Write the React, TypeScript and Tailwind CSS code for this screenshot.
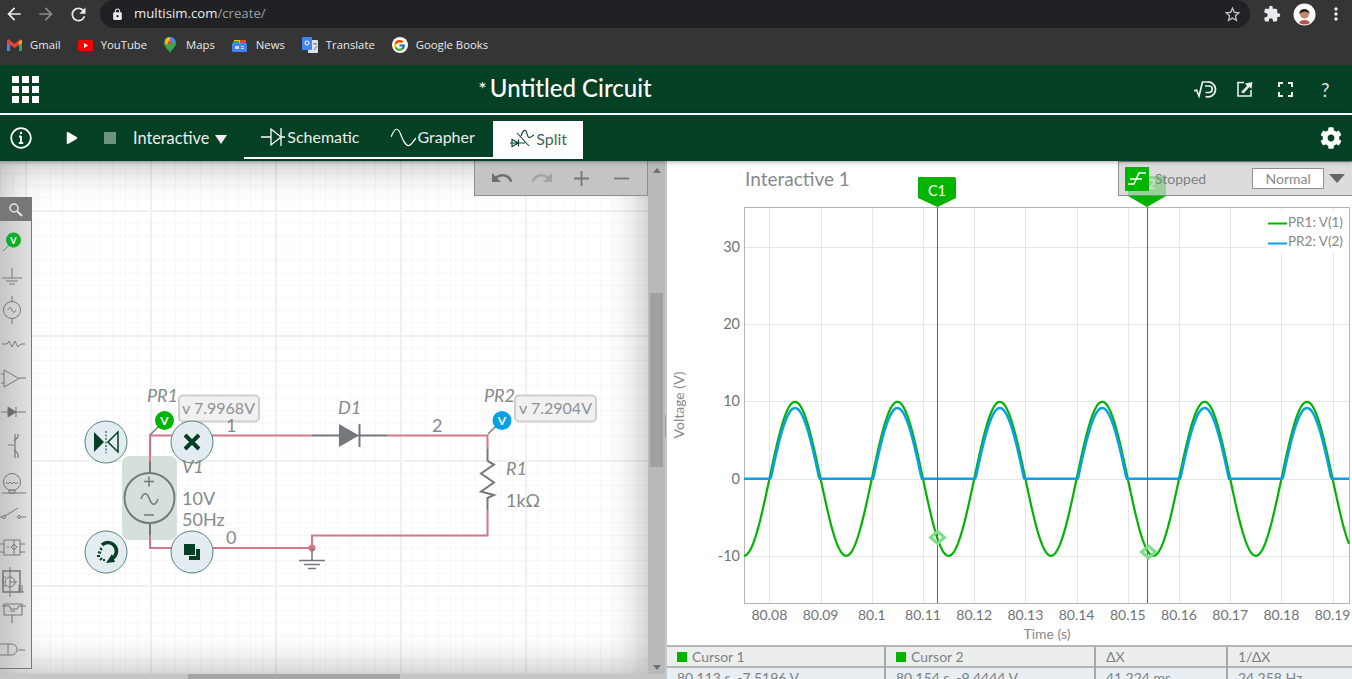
import { FaCog, FaPlay } from 'react-icons/fa';
import { FcGoogle } from 'react-icons/fc';
import { MdArrowBack, MdArrowForward, MdExtension, MdLock, MdMoreVert, MdRedo, MdRefresh, MdStarBorder, MdUndo } from 'react-icons/md';

// chart scale, in page pixels
const xOf = (t: number) => 769.4 + (t - 80.08) * 5120;
const yOf = (v: number) => 478.8 - v * 7.74;

const buildWave = (fn: (x: number) => number) => {
  const pts: string[] = [];
  for (let x = 744; x <= 1349; x += 1) {
    const t = 80.08 + (x - 769.4) / 5120;
    pts.push(`${x},${yOf(fn(t)).toFixed(2)}`);
  }
  return pts.join(' ');
};

const v1 = (t: number) => 9.95 * Math.sin(2 * Math.PI * 50 * (t - 80.08));
const v2 = (t: number) => Math.max(0, v1(t) - 0.8);

const ticksX = ['80.08', '80.09', '80.1', '80.11', '80.12', '80.13', '80.14', '80.15', '80.16', '80.17', '80.18', '80.19'];
const ticksY = [30, 20, 10, 0, -10];

function BrowserBar() {
  return (
    <div className="h-7 bg-[#353535] flex items-center text-[#e8eaed] shrink-0">
      <div className="w-[100px] flex items-center pl-[4px] gap-[12px]">
        <MdArrowBack size={20} />
        <MdArrowForward size={20} className="text-[#8a8b8d]" />
        <MdRefresh size={21} />
      </div>
      <div className="w-[1150px] h-7 bg-[#202124] rounded-r-[14px] rounded-l-[14px] flex items-center pl-[11px] pr-[8px]">
        <MdLock size={13} />
        <span className="ml-[10px] text-[13.2px] font-['Open_Sans',sans-serif]">multisim.com<span className="text-[#9aa0a6]">/create/</span></span>
        <MdStarBorder size={19} className="ml-auto text-[#c4c6c8]" />
      </div>
      <MdExtension size={18} className="ml-[13px]" />
      <svg className="ml-[12px]" width="23" height="23" viewBox="0 0 23 23">
        <circle cx="11.500" cy="11.500" r="11" fill="#fff" />
        <path d="M6 20c1-4 10-4 11 0a11 11 0 0 1-11 0z" fill="#b5573f" />
        <circle cx="11.500" cy="11" r="4.500" fill="#c08a6a" />
        <path d="M6.500 11c-1-6 10-7 10 0-2-3-7-3-10 0z" fill="#2e2420" />
      </svg>
      <MdMoreVert size={20} className="ml-[10px]" />
    </div>
  );
}

function Bookmark({ icon, label }: { icon: React.ReactNode; label: string }) {
  return (
    <div className="flex items-center gap-[8px]">
      {icon}
      <span>{label}</span>
    </div>
  );
}

function BookmarksBar() {
  return (
    <div className="h-[37px] pb-[3px] bg-[#353535] flex items-center pl-[7px] gap-[17px] text-[11.3px] text-[#e8eaed] font-['Open_Sans',sans-serif] shrink-0">
      <Bookmark
        label="Gmail"
        icon={
          <svg width="15" height="12" viewBox="0 0 15 12">
            <path d="M0 2v10h3V5z" fill="#4285f4" />
            <path d="M15 2v10h-3V5z" fill="#34a853" />
            <path d="M0 1.500 1.500 0 7.500 5 13.500 0 15 1.500V4L7.500 9 0 4z" fill="#ea4335" />
            <path d="M12 2.500 15 1v3l-3 2z" fill="#fbbc04" />
          </svg>
        }
      />
      <Bookmark
        label="YouTube"
        icon={
          <svg width="15" height="11" viewBox="0 0 15 11">
            <rect width="15" height="11" rx="2.500" fill="#f00" />
            <path d="M6 3v5l4-2.500z" fill="#fff" />
          </svg>
        }
      />
      <Bookmark
        label="Maps"
        icon={
          <svg width="14" height="16" viewBox="0 0 14 16">
            <path d="M6 0a6 6 0 0 1 6 6c0 4-4 6-6 10C4 12 0 10 0 6a6 6 0 0 1 6-6z" fill="#34a853" />
            <path d="M1 3a6 6 0 0 1 5-3v4L2 8z" fill="#fbbc04" />
            <path d="M6 0a6 6 0 0 1 5.500 3.500L8 6 6 4z" fill="#4285f4" />
            <circle cx="6" cy="5.500" r="2" fill="#ea4335" />
          </svg>
        }
      />
      <Bookmark
        label="News"
        icon={
          <svg width="16" height="13" viewBox="0 0 16 13">
            <path d="M2 1h11v3H2z" fill="#fbbc04" />
            <path d="M1 2h6v3H1z" fill="#34a853" />
            <path d="M8 1h6v3H8z" fill="#ea4335" />
            <rect y="4" width="15" height="9" rx="1" fill="#4285f4" />
            <rect x="3" y="7" width="4" height="3" fill="#cfe0fc" />
            <rect x="9" y="7" width="3" height="1" fill="#cfe0fc" />
            <rect x="9" y="9" width="3" height="1" fill="#cfe0fc" />
          </svg>
        }
      />
      <Bookmark
        label="Translate"
        icon={
          <svg width="16" height="16" viewBox="0 0 16 16">
            <rect x="6" y="3" width="10" height="13" rx="1" fill="#dfe1e5" />
            <rect width="10" height="13" rx="1" fill="#4285f4" />
            <circle cx="5" cy="6" r="2" fill="none" stroke="#fff" strokeWidth="1" />
            <path d="M11 7h4M13 6v1M12 13l3-4" stroke="#777" strokeWidth="1" />
          </svg>
        }
      />
      <Bookmark label="Google Books" icon={<span className="w-4 h-4 rounded-full bg-white flex items-center justify-center"><FcGoogle size={13} /></span>} />
    </div>
  );
}

function AppHeader() {
  return (
    <div className="h-[48px] bg-[#034024] flex items-center relative shrink-0 text-white">
      <div className="grid grid-cols-3 gap-[3px] ml-3">
        {Array.from({ length: 9 }).map((_, i) => (
          <div key={i} className="w-[7px] h-[7px] bg-white" />
        ))}
      </div>
      <div className="flex-1 flex justify-center items-center pr-[103px] pb-[2px]">
        <span className="text-[20px] mr-[3px] leading-none">*</span>
        <span className="text-[24px] font-medium leading-none">Untitled Circuit</span>
      </div>
      <div className="flex items-center text-[#ececec]">
        <svg width="24" height="20" viewBox="0 0 24 20" fill="none" stroke="currentColor" strokeWidth="1.700">
          <path d="M0 12l2.500-1 2.500 6L8.500 3H13" />
          <path d="M13 3a7.500 7.500 0 1 1-1.500 14.500" />
          <path d="M11 7h4a3 3 0 0 1 0 6.500h-3.500" />
        </svg>
        <svg className="ml-[19px]" width="16" height="16" viewBox="0 0 16 16" fill="none">
          <path d="M7 1.500H1v13.500h13V9" stroke="currentColor" strokeWidth="1.600" />
          <path d="M4 11 10 5l-2-2.500L15.500 1l-1 7-2-2-6 6.500z" fill="currentColor" />
        </svg>
        <svg className="ml-[25px]" width="15" height="15" viewBox="0 0 15 15" fill="none" stroke="currentColor" strokeWidth="2">
          <path d="M1 5V1h4M10 1h4v4M14 10v4h-4M5 14H1v-4" />
        </svg>
        <span className="ml-[28px] mr-[21px] w-[10px] text-[19px] leading-none text-[#e2e2e2]">?</span>
      </div>
    </div>
  );
}

function Toolbar() {
  return (
    <div className="shrink-0 bg-[#034024] border-t-2 border-white h-[48px] flex items-center text-[#ededed] relative z-10 shadow-[0_1px_4px_rgba(0,0,0,0.35)]">
      <svg className="ml-[10px]" width="22" height="22" viewBox="0 0 22 22" fill="none" stroke="white" strokeWidth="1.700">
        <circle cx="11" cy="11" r="9.800" />
        <path d="M11 9v7M8.800 16h4.400M9 9.500h2" strokeWidth="1.800" />
        <circle cx="11" cy="6" r="1.200" fill="white" stroke="none" />
      </svg>
      <FaPlay size={12} className="ml-[34px] text-white" />
      <div className="ml-[26px] w-3 h-3 bg-[#6c9581]" />
      <span className="ml-[17px] text-[16.300px]">Interactive</span>
      <span className="ml-[6px] mt-[2px] w-0 h-0 border-x-[6.500px] border-x-transparent border-t-[9px] border-t-[#f0f0f0]" />
      <div className="ml-[17px] w-[249px] h-[38px] mt-[4px] pb-[4px] border-b-2 border-white flex items-center">
        <svg className="ml-[17px]" width="24" height="22" viewBox="0 0 24 22" fill="none" stroke="white" strokeWidth="1.300">
          <path d="M0 11h10M10 3v16l10-8zM20 2v18M20 11h4" />
        </svg>
        <span className="ml-[2px] text-[16px] text-[#ededed]">Schematic</span>
        <svg className="ml-[32px]" width="25" height="22" viewBox="0 0 25 22" fill="none" stroke="white" strokeWidth="1.200">
          <path d="M0 11C4 1 7 1 10 9s6 12 9 10 4-5 6-7" />
        </svg>
        <span className="ml-[1px] text-[16px] text-[#ededed]">Grapher</span>
      </div>
      <div className="w-[90px] h-[38px] mt-[4px] pb-[2px] bg-white flex items-center text-[#3f6a58]">
        <svg className="ml-[16px]" width="26" height="20" viewBox="0 0 26 20" fill="none" stroke="#034024" strokeWidth="1.100">
          <path d="M1 14h15M3 10.500v7l6.500-3.500zM9.500 10.500v7M8 4l12 13" />
          <path d="M12 7c1-3 3-6 4.500-5.500S18 8 20 8.500s3-2 5-2.500" />
        </svg>
        <span className="text-[16px] ml-[1px]">Split</span>
      </div>
      <FaCog size={22} className="ml-auto mr-[10px] text-white" />
    </div>
  );
}

function Palette() {
  return (
    <div className="absolute left-0 top-[36px] w-[32px] h-[472px] border-r border-b border-[#777] bg-gradient-to-r from-[#c4c6c7] to-[#e0e1e1] text-[#777]">
      <div className="h-6 bg-[#777] flex items-center justify-center">
        <svg width="15" height="15" viewBox="0 0 15 15" fill="none" stroke="#e8e8e8" strokeWidth="1.500">
          <circle cx="6" cy="6" r="4" />
          <path d="M9 9l5 5" strokeWidth="2" />
        </svg>
      </div>
      <svg className="block" width="31" height="448" viewBox="0 221 31 448" fill="none" stroke="#777" strokeWidth="1">
        <path d="M3 251l7-7" />
        <circle cx="13.500" cy="240" r="7.500" fill="#10ad2a" stroke="none" />
        <text x="13.500" y="243.500" fontSize="9" fontWeight="700" fill="#fff" stroke="none" textAnchor="middle">V</text>
        <path d="M12 268v10M2 278h20M6 281h12M9 284h6" />
        <circle cx="12" cy="310" r="8.500" />
        <path d="M12 296v5M12 319v5M8 310c1-3 3-3 4 0s3 3 4 0" />
        <path d="M2 344h5l2-3 3 6 3-6 3 6 3-3h4" />
        <path d="M4 370v17l15-8.500zM19 378h7M1 374h3M1 383h3" />
        <path d="M8 407v10l8-5zM16 407v10M1 412h25" fill="#666" />
        <path d="M15 434v24M8 445h6M14 441l4-4M14 449l4 5M18 437v-3M18 454v4" strokeWidth="1.200" />
        <circle cx="12" cy="482" r="8.500" />
        <path d="M6 482l2 2 2-2 2 2 2-2 2 2 2-2M2 493h24M9 490h6v3H9z" />
        <circle cx="4" cy="517" r="1.500" />
        <circle cx="19" cy="517" r="1.500" />
        <path d="M0 517h3M5 516l13-8M21 517h5" />
        <rect x="4" y="540" width="16" height="15" />
        <path d="M0 544h4M0 552h4M20 544h5M20 552h5M14 540v15M11 547l3-3 3 3-3 3zM7 547h2" />
        <rect x="3" y="571" width="17" height="21" strokeWidth="1.500" />
        <circle cx="10" cy="582" r="5" />
        <path d="M10 567v30M10 582h7M19 585v7h5M22 585v7M6 577H3v9h3" />
        <path d="M2 606h7l2 3h6l2-3h7M4 604h18v11H4zM12 615v8M10 611h5" strokeWidth="1.100" />
        <path d="M0 644h8v11H0M8 644h4a5.500 5.500 0 0 1 5 5.500 5.500 5.500 0 0 1-5 5.500H8M18 650h7" />
      </svg>
    </div>
  );
}

function CircleButton({ cx, cy, children }: { cx: number; cy: number; children: React.ReactNode }) {
  return (
    <g>
      <circle cx={cx} cy={cy} r="21" fill="#e3ecf1" stroke="#56867a" strokeWidth="1" />
      {children}
    </g>
  );
}

function Circuit() {
  const wire = '#d27887';
  const lead = '#74787c';
  const label = '#85898c';
  return (
    <svg className="absolute left-0 top-0" width="648" height="513" viewBox="0 161 648 513" fill="none">
      {/* selection behind the source */}
      <rect x="122" y="456" width="55" height="84" rx="7" fill="#d6e0da" />

      <path d="M150 462V435.500H312M387 435.500H487.500V449M487.500 510V535.500H312V548M150 522V548H312" stroke={wire} strokeWidth="2" />
      <path d="M312 435.500H340M358 435.500H387" stroke={lead} strokeWidth="2" />
      <path d="M150 462V473M150 524V535" stroke={lead} strokeWidth="2" />
      <path d="M487.500 449V461M487.500 497V510" stroke={lead} strokeWidth="2" />

      {/* V1 */}
      <circle cx="149.500" cy="498" r="25" stroke={lead} strokeWidth="2" fill="#d6e0da" />
      <path d="M144 481.500h10M149 476.500v10M144 515h10" stroke={lead} strokeWidth="1.500" />
      <path d="M141 499c2.500-7 6-7 8.500 0s6 7 8.500 0" stroke={lead} strokeWidth="1.500" />

      {/* D1 */}
      <path d="M339 424v23l20-11.500z" fill={lead} />
      <path d="M359.500 424v23" stroke={lead} strokeWidth="2" />

      {/* R1 */}
      <path d="M487.500 461l6.500 3.500-13 9 13 9-13 9 13 3.500-6.500 3" stroke={lead} strokeWidth="2" strokeLinejoin="miter" />

      {/* ground */}
      <circle cx="312" cy="548" r="3.500" fill={wire} />
      <path d="M312 548v12M299 560.500h26M304 564.500h16M308 568.500h8" stroke={lead} strokeWidth="1.500" />

      {/* probes */}
      <path d="M150 435l9-9" stroke={lead} strokeWidth="1.500" />
      <circle cx="164.500" cy="420.500" r="9.500" fill="#00b400" />
      <text x="164.500" y="425" fontSize="12" fontWeight="700" fill="#fff" textAnchor="middle">V</text>
      <path d="M488 434l9-9" stroke={lead} strokeWidth="1.500" />
      <circle cx="502" cy="420.500" r="9.500" fill="#07a0e6" />
      <text x="502" y="425" fontSize="12" fontWeight="700" fill="#fff" textAnchor="middle">V</text>

      <rect x="179" y="395.500" width="80" height="26" rx="4" fill="#f1f1f1" stroke="#cfcfcf" strokeWidth="2" />
      <text x="182" y="414" fontSize="16" fill="#8e9195">v 7.9968V</text>
      <rect x="515" y="395.500" width="81" height="26" rx="4" fill="#f1f1f1" stroke="#cfcfcf" strokeWidth="2" />
      <text x="519" y="414" fontSize="16" fill="#8e9195">v 7.2904V</text>

      <CircleButton cx={106} cy={442}>
        <path d="M94 432v20l10-10z" fill="#043f26" />
        <path d="M118 432v20l-10-10z" fill="#e3ecf1" stroke="#043f26" strokeWidth="1.500" />
        <path d="M106 431v22" stroke="#043f26" strokeDasharray="2 1.500" />
      </CircleButton>
      <CircleButton cx={192} cy={442}>
        <path d="M185 435l14 14M199 435l-14 14" stroke="#043f26" strokeWidth="4" />
      </CircleButton>
      <CircleButton cx={106} cy={552}>
        <path d="M102 545a8.500 8.500 0 1 1 9 14" stroke="#043f26" strokeWidth="3.500" />
        <path d="M106 563l9-1-3-8z" fill="#043f26" />
        <path d="M97 556h3M98 552l3 1M100 548l2 2M100 560l2-2M104 561l0-2" stroke="#043f26" strokeWidth="2" />
      </CircleButton>
      <CircleButton cx={192} cy={552}>
        <rect x="184" y="544" width="11" height="11" fill="#043f26" />
        <path d="M196 549h4v11h-11v-4h7z" fill="#043f26" />
      </CircleButton>

      <g fontSize="18" fill={label}>
        <text x="147" y="401.500" fontStyle="italic">PR1</text>
        <text x="484" y="401.500" fontStyle="italic">PR2</text>
        <text x="338" y="414" fontStyle="italic">D1</text>
        <text x="182" y="473" fontStyle="italic">V1</text>
        <text x="182" y="505">10V</text>
        <text x="182" y="526">50Hz</text>
        <text x="226" y="432">1</text>
        <text x="432" y="432">2</text>
        <text x="226" y="544">0</text>
        <text x="506" y="475" fontStyle="italic">R1</text>
        <text x="506" y="507">1kΩ</text>
      </g>
    </svg>
  );
}

function SchematicPane() {
  return (
    <div className="w-[667px] shrink-0 flex flex-col bg-[#b9babb] border-r-2 border-[#c3c8cd]">
      <div className="flex flex-1 min-h-0">
        <div className="relative w-[648px] shrink-0 overflow-hidden bg-white [background-image:linear-gradient(#f0f0f0_2px,transparent_2px),linear-gradient(90deg,#f0f0f0_2px,transparent_2px),linear-gradient(#f7f7f7_1px,transparent_1px),linear-gradient(90deg,#f7f7f7_1px,transparent_1px)] [background-size:125px_125px,125px_125px,12.5px_12.5px,12.5px_12.5px] [background-position:0_49px,25px_0,0_-1px,0_0]">
          <div className="absolute inset-0 shadow-[inset_0_0_42px_rgba(0,0,0,0.33)]" />
          <Circuit />
          <Palette />
          <div className="absolute top-0 right-0 w-[174px] h-[35px] bg-[#c4c4c4] border-x border-b border-[#8f8f8f] flex items-center text-[#6e6e6e]">
            <MdUndo size={24} className="ml-[15px]" />
            <MdRedo size={24} className="ml-[16px] text-[#a3a3a3]" />
            <span className="ml-[18px] w-[18px] h-[18px] flex items-center justify-center">
              <svg width="15" height="15" viewBox="0 0 15 15" stroke="#767676" strokeWidth="1.800"><path d="M0 7.500h15M7.500 0v15" /></svg>
            </span>
            <svg className="ml-[24px]" width="15" height="3" viewBox="0 0 15 3" stroke="#767676" strokeWidth="1.800"><path d="M0 1.500h15" /></svg>
          </div>
        </div>
        <div className="flex-1 flex flex-col items-center relative">
          <span className="mt-[7px] w-0 h-0 border-x-[4px] border-x-transparent border-b-[5px] border-b-[#6f6f6f]" />
          <div className="mt-[120px] w-[13px] h-[174px] bg-[#a0a0a0]" />
          <span className="mt-auto mb-[4px] w-0 h-0 border-x-[4px] border-x-transparent border-t-[5px] border-t-[#6f6f6f]" />
        </div>
      </div>
      <div className="h-[5px] shrink-0 bg-[#c5c5c5] pl-[188px]">
        <div className="w-[212px] h-[5px] bg-[#a6a6a6]" />
      </div>
    </div>
  );
}

function Chart() {
  return (
    <svg className="absolute inset-0" width="685" height="484" viewBox="667 161 685 484" fill="none">
      {/* grid */}
      {ticksX.map((t) => (
        <path key={t} d={`M${Math.round(xOf(Number(t))) + 0.5} 207V603`} stroke="#e6e6e6" />
      ))}
      {ticksY.map((v) => (
        <path key={v} d={`M744 ${Math.round(yOf(v)) + 0.5}H1349`} stroke="#e6e6e6" />
      ))}
      <rect x="744.500" y="207.500" width="605" height="396" stroke="#b4b4b4" />

      {/* curves */}
      <polyline points={buildWave(v1)} stroke="#00b400" strokeWidth="2.200" />
      <polyline points={buildWave(v2)} stroke="#0aa0e8" strokeWidth="2.500" />

      {/* cursors */}
      <path d="M937.500 207V603M1147.500 207V603" stroke="#109a20" />
      <path d="M930.500 537.500l7-6 7 6-7 6zM1141.500 552l7-6 7 6-7 6z" stroke="#7fdc8a" strokeWidth="3" />
      <path d="M921 177h33a2 2 0 0 1 2 2v19l-18.500 9-19.500-9v-19a2 2 0 0 1 3-2z" fill="#00b400" />
      <text x="937" y="196" fontSize="14.500" fill="#fff" textAnchor="middle">C1</text>
      <path d="M1128 196h38l-19 11z" fill="#00b400" />

      {/* axis labels */}
      {ticksY.map((v) => (
        <text key={v} x="740" y={yOf(v) + 5} fontSize="14.500" fill="#6f7478" textAnchor="end">{v}</text>
      ))}
      {ticksX.map((t) => (
        <text key={t} x={xOf(Number(t))} y="620" fontSize="14" fill="#6f7478" textAnchor="middle">{t}</text>
      ))}
      <text x="1047" y="639" fontSize="14" fill="#85898c" textAnchor="middle">Time (s)</text>
      <text x="684" y="405" fontSize="14" fill="#85898c" textAnchor="middle" transform="rotate(-90 684 405)">Voltage (V)</text>
      <text x="745" y="186" fontSize="19" fill="#85898c">Interactive 1</text>

      {/* legend */}
      <rect x="1266" y="212" width="82" height="41" fill="#fff" />
      <path d="M1268 223.500h19" stroke="#00b400" strokeWidth="2" />
      <path d="M1268 243.500h19" stroke="#0aa0e8" strokeWidth="2" />
      <text x="1288" y="226.500" fontSize="13.500" fill="#85898c">PR1: V(1)</text>
      <text x="1288" y="246" fontSize="13.500" fill="#85898c">PR2: V(2)</text>
    </svg>
  );
}

function CursorTable() {
  const cols = [
    { w: 'w-[217px]', head: 'Cursor 1', val: '80.113 s, -7.5196 V', mark: true },
    { w: 'w-[210px]', head: 'Cursor 2', val: '80.154 s, -9.4444 V', mark: true },
    { w: 'w-[132px]', head: 'ΔX', val: '41.224 ms', mark: false },
    { w: 'flex-1', head: '1/ΔX', val: '24.258 Hz', mark: false },
  ];
  return (
    <div className="h-[34px] overflow-hidden shrink-0 flex text-[14px] text-[#7d8185] border-t-2 border-[#b4b4b4] mt-auto">
      {cols.map((c, i) => (
        <div key={c.head} className={`${c.w} ${i > 0 ? 'border-l-2 border-[#a8a8a8]' : ''} shrink-0`}>
          <div className="h-[21px] bg-[#eceeee] border-b-2 border-[#b4b4b4] flex items-center pl-[10px]">
            {c.mark && <span className="w-[10px] h-[10px] bg-[#00b400] mr-[5px]" />}
            <span>{c.head}</span>
          </div>
          <div className="h-[14px] bg-[#e8eef2] pl-[10px] leading-[19px] whitespace-nowrap">{c.val}</div>
        </div>
      ))}
    </div>
  );
}

function GrapherPane() {
  return (
    <div className="flex-1 min-w-0 flex flex-col relative bg-white">
      <Chart />
      {/* run state panel, sits over the C2 flag */}
      <div className="absolute right-0 top-0 w-[234px] h-[35px] bg-[#dcdcdc] border-l border-b border-t border-[#8f8f8f] flex items-center text-[14px] text-[#7d8185]">
        <div className="absolute left-[9px] top-[14px] w-[38px] h-[20px] bg-[#00b400]/30 overflow-hidden text-center text-[14px] leading-[16px] text-white/60">C2</div>
        <div className="ml-[6px] w-6 h-6 bg-[#00b400] flex items-center justify-center relative">
          <svg width="20" height="16" viewBox="0 0 20 16" fill="none" stroke="#fff" strokeWidth="1.500">
            <path d="M1 13h6L12 2h7M3 8h12" />
          </svg>
        </div>
        <span className="ml-[6px] relative">Stopped</span>
        <div className="ml-[46px] w-[72px] h-[21px] bg-white border border-[#8f8f8f] flex items-center justify-center leading-none text-[#8a8a8a]">Normal</div>
        <span className="ml-[5px] w-0 h-0 border-x-[8px] border-x-transparent border-t-[9px] border-t-[#666]" />
      </div>
      <div className="absolute left-[-2px] top-[254px] w-[1px] h-[22px] bg-[#9aa0a4]" />
      <CursorTable />
    </div>
  );
}

export default function App() {
  return (
    <div className="w-[1352px] h-[679px] overflow-hidden flex flex-col font-['Lato',sans-serif] bg-white">
      <BrowserBar />
      <BookmarksBar />
      <AppHeader />
      <Toolbar />
      <div className="flex flex-1 min-h-0">
        <SchematicPane />
        <GrapherPane />
      </div>
    </div>
  );
}
